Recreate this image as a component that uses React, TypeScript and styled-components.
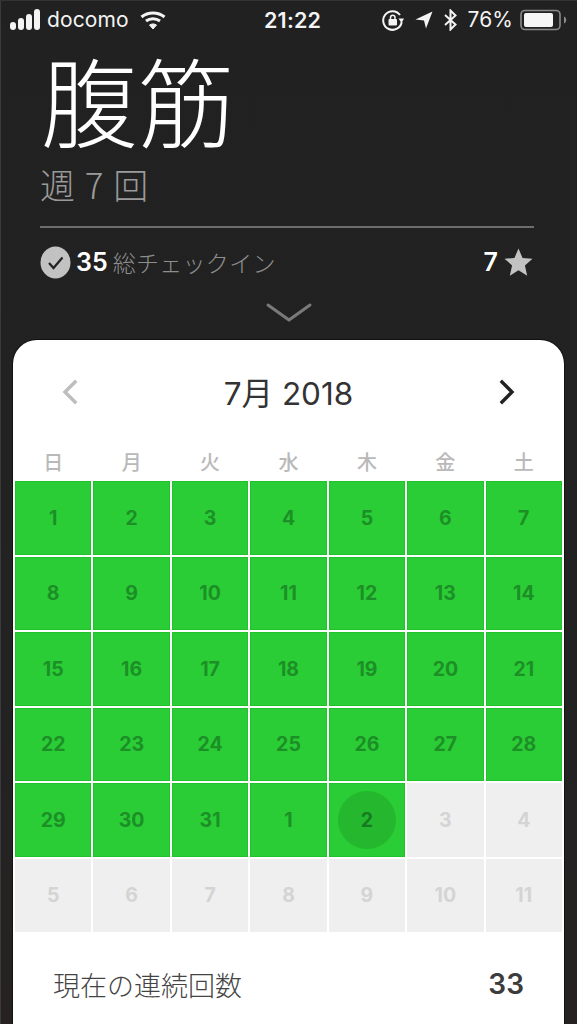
import React from 'react';
import styled, { createGlobalStyle } from 'styled-components';

const GlobalStyle = createGlobalStyle`
  html, body {
    margin: 0;
    padding: 0;
    background: #222222;
  }
  body {
    font-family: 'Inter', 'Noto Sans CJK JP', sans-serif;
  }
`;

const Page = styled.div`
  width: 577px;
  height: 1024px;
  overflow: hidden;
  background: linear-gradient(180deg, #212121 0%, #222222 60%, #262222 100%);
  box-shadow: inset 1px 0 0 #3a3a3a;
  color: #fff;
  border-top: 1px solid #333;
  box-sizing: border-box;
`;

const StatusBar = styled.div`
  height: 37px;
  padding: 0 9px 0 10px;
  display: grid;
  grid-template-columns: 254px auto 1fr;
  align-items: center;
  font-family: 'Inter', sans-serif;
  color: #f4f4f4;
`;

const StatusSide = styled.div<{ $end?: boolean }>`
  display: flex;
  align-items: center;
  justify-content: ${(p) => (p.$end ? 'flex-end' : 'flex-start')};
  gap: ${(p) => (p.$end ? '11px' : '6px')};
`;

const Time = styled.div`
  font-weight: 600;
  font-size: 21.5px;
  letter-spacing: 0.2px;
`;

const Carrier = styled.span`
  font-weight: 400;
  font-size: 21px;
  letter-spacing: 0.1px;
`;

const Header = styled.div`
  padding: 4px 44px 0 40px;
`;

const Title = styled.h1`
  margin: 0 0 6px 1px;
  font-family: 'Noto Sans CJK JP', sans-serif;
  font-weight: 300;
  font-size: 97px;
  line-height: 112px;
  color: #fff;
`;

const Subtitle = styled.div`
  font-family: 'Noto Sans CJK JP', sans-serif;
  font-weight: 300;
  font-size: 35px;
  line-height: 48px;
  color: #9a9a9a;
  word-spacing: 2px;
`;

const Rule = styled.div`
  height: 2px;
  margin: 18px -1px 0 0;
  background: #6e6e6e;
`;

const Stats = styled.div`
  height: 68px;
  display: flex;
  align-items: center;
  justify-content: space-between;
`;

const StatGroup = styled.div`
  display: flex;
  align-items: center;
  gap: 6px;
`;

const StatNumber = styled.span`
  font-family: 'Inter', sans-serif;
  font-weight: 600;
  font-size: 25px;
  color: #fff;
`;

const StatLabel = styled.span`
  font-family: 'Noto Sans CJK JP', sans-serif;
  font-weight: 300;
  font-size: 23px;
  letter-spacing: 0.3px;
  color: #8e8e8e;
  margin-left: -1px;
`;

const ChevronWrap = styled.div`
  height: 37px;
  display: flex;
  justify-content: center;
  align-items: flex-start;
  padding-top: 7px;
`;

const Card = styled.div`
  margin: 0 13px;
  height: 700px;
  background: #fff;
  border-radius: 24px 24px 0 0;
  box-shadow: 0 0 0 1px #111;
  padding: 0 2px;
  color: #333;
`;

const MonthBar = styled.div`
  height: 104px;
  padding: 0 47px;
  display: flex;
  align-items: center;
  justify-content: space-between;
`;

const MonthLabel = styled.div`
  font-family: 'Inter', 'Noto Sans CJK JP', sans-serif;
  font-size: 31.5px;
  padding-bottom: 3px;
  color: #333;
`;

const Weekdays = styled.div`
  display: grid;
  grid-template-columns: repeat(7, 1fr);
  column-gap: 2px;
  height: 37px;
`;

const Weekday = styled.div`
  font-family: 'Noto Sans CJK JP', sans-serif;
  font-weight: 500;
  font-size: 20px;
  line-height: 35px;
  text-align: center;
  color: #b9b9b9;
`;

const Grid = styled.div`
  display: grid;
  grid-template-columns: repeat(7, 1fr);
  grid-auto-rows: 73.5px;
  gap: 2px;
`;

const Cell = styled.div<{ $done: boolean }>`
  display: flex;
  align-items: center;
  justify-content: center;
  box-sizing: border-box;
  font-family: 'Inter', sans-serif;
  font-weight: 700;
  font-size: 19.5px;
  background: ${(p) => (p.$done ? '#2acd35' : '#efefef')};
  border: 1px solid ${(p) => (p.$done ? '#1fc42a' : '#efefef')};
  color: ${(p) => (p.$done ? '#1d8f27' : '#d4d4d4')};
`;

const Today = styled.div`
  width: 58px;
  height: 58px;
  border-radius: 50%;
  background: #25b72e;
  color: #187a20;
  display: flex;
  align-items: center;
  justify-content: center;
`;

const SummaryRow = styled.div`
  display: flex;
  justify-content: space-between;
  align-items: center;
  height: 104px;
  padding: 0 38px;
`;

const SummaryLabel = styled.span`
  font-family: 'Noto Sans CJK JP', sans-serif;
  font-weight: 300;
  font-size: 27px;
  color: #444;
`;

const SummaryValue = styled.span`
  font-family: 'Inter', sans-serif;
  font-weight: 600;
  font-size: 28px;
  color: #3c3c3c;
`;

const weekdays = ['日', '月', '火', '水', '木', '金', '土'];
const days = [
  ...Array.from({ length: 31 }, (_, i) => i + 1),
  ...Array.from({ length: 11 }, (_, i) => i + 1),
];
const doneCount = 33;
const todayIndex = 32;

const SignalIcon = () => (
  <svg width="31" height="21" viewBox="0 0 31 21" fill="#f4f4f4">
    <rect x="0" y="13" width="6" height="8" rx="3" />
    <rect x="8" y="9" width="6" height="12" rx="3" />
    <rect x="16" y="5" width="6" height="16" rx="3" />
    <rect x="24" y="0" width="6" height="21" rx="3" />
  </svg>
);

const WifiIcon = () => (
  <svg width="26" height="20" viewBox="0 0 26 20" fill="none" stroke="#f4f4f4" strokeWidth="3" style={{ marginLeft: 5 }}>
    <path d="M1.5 7 C8 1.5 18 1.5 24.5 7" />
    <path d="M6 11 C10 8 16 8 20 11" />
    <path d="M13 19 L9.5 15 C11.5 13.6 14.5 13.6 16.5 15 Z" fill="#f4f4f4" strokeWidth="1" />
  </svg>
);

const RotationLockIcon = () => (
  <svg width="22" height="22" viewBox="0 0 22 22" fill="none" stroke="#f4f4f4">
    <path d="M18 6 A9.3 9.3 0 1 0 19.7 13" strokeWidth="2" />
    <path d="M16.5 9.5 L22 9.5 L19.5 14 Z" fill="#f4f4f4" strokeWidth="0" />
    <rect x="6.5" y="10" width="8.5" height="6.5" rx="1" fill="#f4f4f4" strokeWidth="0" />
    <path d="M8.5 10.5 V8.5 A2.2 2.2 0 0 1 13 8.5 V10.5" strokeWidth="1.5" />
  </svg>
);

const LocationIcon = () => (
  <svg width="18" height="18" viewBox="0 0 18 18" fill="#f4f4f4">
    <path d="M17.5 0.5 L0.5 8.5 L9 9.4 L11 17.5 Z" />
  </svg>
);

const BluetoothIcon = () => (
  <svg width="13" height="22" viewBox="0 0 13 22" fill="none" stroke="#f4f4f4" strokeWidth="2">
    <path d="M1 6 L11.5 15.5 L6.5 20.5 V1.5 L11.5 6.5 L1 16" />
  </svg>
);

const BatteryIcon = () => (
  <svg width="48" height="22" viewBox="0 0 48 22" style={{ marginLeft: -4 }}>
    <rect x="1" y="1.5" width="39" height="19" rx="4" fill="none" stroke="#8a8a8a" strokeWidth="1.6" />
    <rect x="4" y="4" width="29" height="14" rx="2" fill="#f6f6f6" />
    <path d="M44 7.5 C47 8.5 47 13.5 44 14.5 Z" fill="#8a8a8a" />
  </svg>
);

const CheckBadge = () => (
  <svg width="31" height="33" viewBox="0 0 31 33" style={{ flex: 'none', marginRight: -1 }}>
    <ellipse cx="15.5" cy="16.5" rx="15" ry="16" fill="#c2c2c2" />
    <path d="M9 17 L13.5 22 L22.5 11.5" fill="none" stroke="#222" strokeWidth="2.2" />
  </svg>
);

const StarIcon = () => (
  <svg width="29" height="29" viewBox="0 0 28 28" fill="#c2c2c2">
    <path d="M14 0.5 L17.9 9.6 L27.5 10.4 L20.2 16.8 L22.4 26.8 L14 21.6 L5.6 26.8 L7.8 16.8 L0.5 10.4 L10.1 9.6 Z" />
  </svg>
);

const ChevronDown = () => (
  <svg width="46" height="20" viewBox="0 0 46 20" fill="none" stroke="#7a7a7a" strokeWidth="3" strokeLinecap="round" strokeLinejoin="round">
    <path d="M2 2 L23 17 L44 2" />
  </svg>
);

const MonthArrow = ({ color, flip }: { color: string; flip?: boolean }) => (
  <svg width="16" height="26" viewBox="0 0 16 26" fill="none" stroke={color} strokeWidth="3.4" strokeLinecap="square">
    <path d={flip ? 'M3 3 L13 13 L3 23' : 'M13 3 L3 13 L13 23'} />
  </svg>
);

const App = () => (
  <Page>
    <GlobalStyle />
    <StatusBar>
      <StatusSide>
        <SignalIcon />
        <Carrier>docomo</Carrier>
        <WifiIcon />
      </StatusSide>
      <Time>21:22</Time>
      <StatusSide $end>
        <RotationLockIcon />
        <LocationIcon />
        <BluetoothIcon />
        <Carrier>76%</Carrier>
        <BatteryIcon />
      </StatusSide>
    </StatusBar>
    <Header>
      <Title>腹筋</Title>
      <Subtitle>週 7 回</Subtitle>
      <Rule />
      <Stats>
        <StatGroup>
          <CheckBadge />
          <StatNumber>35</StatNumber>
          <StatLabel>総チェックイン</StatLabel>
        </StatGroup>
        <StatGroup>
          <StatNumber>7</StatNumber>
          <StarIcon />
        </StatGroup>
      </Stats>
    </Header>
    <ChevronWrap>
      <ChevronDown />
    </ChevronWrap>
    <Card>
      <MonthBar>
        <MonthArrow color="#bdbdbd" />
        <MonthLabel>7月 2018</MonthLabel>
        <MonthArrow color="#222" flip />
      </MonthBar>
      <Weekdays>
        {weekdays.map((d) => (
          <Weekday key={d}>{d}</Weekday>
        ))}
      </Weekdays>
      <Grid>
        {days.map((d, i) => (
          <Cell key={i} $done={i < doneCount}>
            {i === todayIndex ? <Today>{d}</Today> : d}
          </Cell>
        ))}
      </Grid>
      <SummaryRow>
        <SummaryLabel>現在の連続回数</SummaryLabel>
        <SummaryValue>33</SummaryValue>
      </SummaryRow>
    </Card>
  </Page>
);

export default App;
